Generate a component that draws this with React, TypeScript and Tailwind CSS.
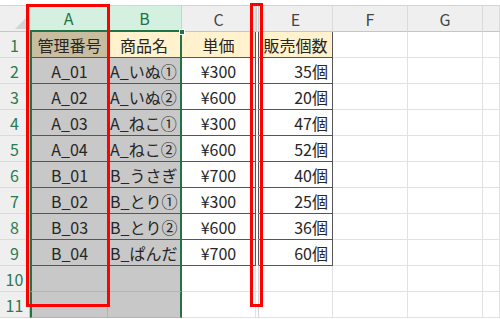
import React from "react";

const COLS = ["A", "B", "C", "D", "E", "F", "G", "H"];

const rows: string[][] = [
  ["管理番号", "商品名", "単価", "", "販売個数"],
  ["A_01", "A_いぬ①", "¥300", "", "35個"],
  ["A_02", "A_いぬ②", "¥600", "", "20個"],
  ["A_03", "A_ねこ①", "¥300", "", "47個"],
  ["A_04", "A_ねこ②", "¥600", "", "52個"],
  ["B_01", "B_うさぎ", "¥700", "", "40個"],
  ["B_02", "B_とり①", "¥300", "", "25個"],
  ["B_03", "B_とり②", "¥600", "", "36個"],
  ["B_04", "B_ぱんだ", "¥700", "", "60個"],
  ["", "", "", "", ""],
  ["", "", "", "", ""],
];

function headerClass(col: string) {
  if (col === "A" || col === "B")
    return "bg-[#d3f0e0] text-[#217346] border-r border-r-[#b9dcc8] border-b-2 border-b-[#217346]";
  if (col === "D") return "bg-[#efefef] border-r border-r-[#d0d0d0] border-l border-l-[#d0d0d0] border-b border-b-[#c6c6c6]";
  return "bg-[#efefef] text-[#444] border-r border-r-[#dadada] border-b border-b-[#c6c6c6]";
}

// selected columns A:B carry the green selection edge on their outer sides
function cellClass(r: number, c: number) {
  const col = COLS[c];
  const inTable = r < 9 && c <= 4;
  if (col === "A") {
    if (r === 0)
      return "bg-[#c9bd9f] border-l-2 border-l-[#217346] border-r border-r-[#555] border-b border-b-[#555] justify-center";
    if (inTable)
      return "bg-[#c8c8c8] border-l-2 border-l-[#217346] border-r border-r-[#555] border-b border-b-[#555] justify-center";
    return "bg-[#c8c8c8] border-l-2 border-l-[#217346] border-r border-r-[#b4b4b4] border-b border-b-[#b4b4b4]";
  }
  if (col === "B") {
    if (r === 0)
      return "bg-[#fff2cc] border-r-2 border-r-[#217346] border-b border-b-[#555] justify-center";
    if (inTable)
      return "bg-[#c8c8c8] border-r-2 border-r-[#217346] border-b border-b-[#555] justify-start pl-[2px]";
    return "bg-[#c8c8c8] border-r-2 border-r-[#217346] border-b border-b-[#b4b4b4]";
  }
  if (col === "D") {
    return r < 9
      ? "bg-white border-r border-r-[#555] border-b border-b-[#e2e2e2]"
      : "bg-white border-r border-r-[#d6d6d6] border-b border-b-[#e2e2e2]";
  }
  if (r === 0 && inTable) return "bg-[#fff2cc] border-r border-b border-[#555] justify-center";
  if (inTable) {
    if (col === "C") return "bg-white border-r border-b border-[#555] justify-center";
    return "bg-white border-r border-b border-[#555] justify-end pr-[4px]";
  }
  return "bg-white border-r border-b border-[#e2e2e2]";
}

export default function App() {
  return (
    <div
      className="relative w-[500px] h-[319px] overflow-hidden bg-white pt-[5px] text-[#262626]"
      style={{ fontFamily: '"Noto Sans CJK JP", "Noto Sans", sans-serif' }}
    >
      <div className="grid grid-cols-[30px_78px_74px_74px_3px_74px_75px_75px_1fr] grid-rows-[26px_repeat(11,26px)] border-t border-[#d4d4d4]">
        {/* select-all corner */}
        <div className="relative bg-[#efefef] border-r border-b border-[#c6c6c6]">
          <svg className="absolute right-[2px] bottom-[2px]" width="12" height="12" viewBox="0 0 12 12">
            <polygon points="12,0 12,12 0,12" fill="#d4d4d4" />
          </svg>
        </div>
        {COLS.map((col) => (
          <div key={col} className={`flex items-center justify-center text-[16px] ${headerClass(col)}`}>
            {col === "D" || col === "H" ? "" : col}
          </div>
        ))}

        {rows.map((row, r) => (
          <React.Fragment key={r}>
            <div className="flex items-center justify-center bg-[#efefef] text-[#2a7a52] text-[16px] border-r border-r-[#c6c6c6] border-b border-b-[#dadada]">
              {r + 1}
            </div>
            {COLS.map((_, c) => (
              <div
                key={c}
                className={`flex items-center overflow-hidden whitespace-nowrap text-[16px] leading-none pt-[1px] ${cellClass(r, c)}`}
              >
                {row[c] ?? ""}
              </div>
            ))}
          </React.Fragment>
        ))}
      </div>

      {/* fill handle */}
      <div className="absolute left-[179px] top-[29px] w-[6px] h-[6px] bg-[#217346] border border-white" />

      {/* red annotation boxes */}
      <div className="absolute left-[26px] top-[4px] w-[84px] h-[303px] border-[3px] border-[#ff0000]" />
      <div className="absolute left-[250px] top-[3px] w-[13px] h-[304px] border-[3px] border-[#ff0000]" />
    </div>
  );
}
